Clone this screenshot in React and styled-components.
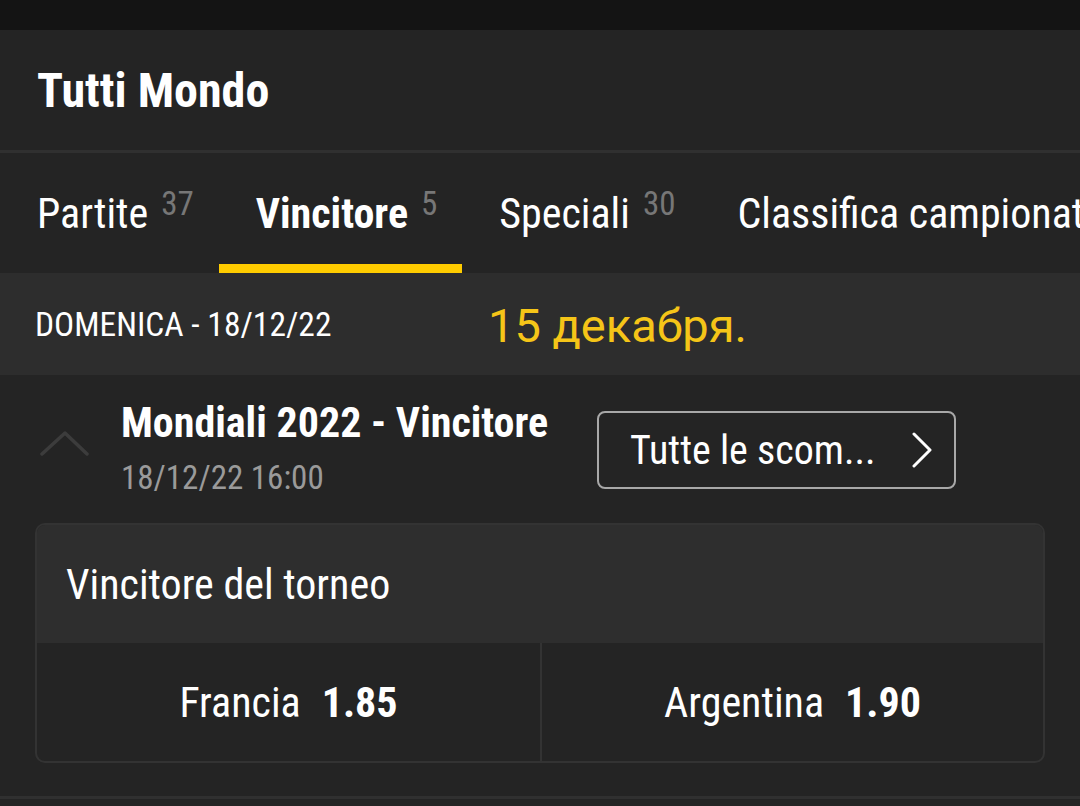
import React from 'react';
import styled, { createGlobalStyle } from 'styled-components';

const GlobalStyle = createGlobalStyle`
    html, body {
        margin: 0;
        padding: 0;
        background: #242424;
    }
    body {
        font-family: "Roboto Condensed", "Liberation Sans Narrow", "DejaVu Sans Condensed", sans-serif;
        color: #ffffff;
        overflow: hidden;
    }
`;

const Page = styled.div`
    width: 1080px;
    height: 806px;
    display: flex;
    flex-direction: column;
    background: #242424;
    overflow: hidden;
`;

const StatusBar = styled.div`
    height: 30px;
    background: #141414;
    flex-shrink: 0;
`;

const Header = styled.header`
    height: 120px;
    display: flex;
    align-items: center;
    padding: 0 37px;
    border-bottom: 3px solid #303030;
    flex-shrink: 0;
`;

const Title = styled.h1`
    margin: 0;
    font-size: 48px;
    font-weight: 700;
`;

const Tabs = styled.nav`
    height: 120px;
    display: flex;
    overflow: hidden;
    white-space: nowrap;
    flex-shrink: 0;
`;

const Tab = styled.div`
    position: relative;
    display: flex;
    align-items: center;
    padding: 0 25px 0 37px;
    font-size: 42px;
    font-weight: ${p => (p.active ? 700 : 400)};
    flex-shrink: 0;

    &::after {
        content: '';
        position: absolute;
        left: 0;
        right: 0;
        bottom: 0;
        height: 9px;
        background: ${p => (p.active ? '#ffcc00' : 'transparent')};
    }
`;

const Count = styled.sup`
    font-size: 33px;
    font-weight: 400;
    color: #777777;
    margin-left: 13px;
    position: relative;
    top: -10px;
`;

const DateBand = styled.div`
    height: 102px;
    display: flex;
    align-items: center;
    padding: 0 35px;
    background: #2d2d2d;
    flex-shrink: 0;
`;

const DayLabel = styled.span`
    font-size: 33.5px;
    width: 453px;
    flex-shrink: 0;
`;

const Note = styled.span`
    font-family: Roboto, "Noto Sans", sans-serif;
    font-size: 47px;
    color: #f5c518;
    position: relative;
    top: 1px;
`;

const EventRow = styled.div`
    display: flex;
    align-items: flex-start;
    padding: 26px 0 0 40px;
    height: 122px;
    flex-shrink: 0;
`;

const Collapse = styled.div`
    width: 81px;
    padding-top: 30px;
    flex-shrink: 0;
`;

const EventInfo = styled.div`
    display: flex;
    flex-direction: column;
    width: 476px;
    flex-shrink: 0;
`;

const EventTitle = styled.div`
    font-size: 42px;
    font-weight: 700;
    line-height: 44px;
`;

const EventTime = styled.div`
    font-size: 33px;
    color: #9a9a9a;
    margin-top: 13px;
`;

const MoreButton = styled.button`
    margin-top: 10px;
    width: 359px;
    height: 78px;
    border: 2px solid #a8a8a8;
    border-radius: 8px;
    background: transparent;
    color: #ffffff;
    font-family: inherit;
    font-size: 40px;
    display: flex;
    align-items: center;
    justify-content: space-between;
    padding: 0 21px 0 31px;
    box-sizing: border-box;
`;

const Card = styled.section`
    margin: 0 35px;
    border: 2px solid #333333;
    border-radius: 10px;
    overflow: hidden;
    flex-shrink: 0;
`;

const CardHeader = styled.div`
    height: 118px;
    background: #2e2e2e;
    display: flex;
    align-items: center;
    padding: 0 29px;
    font-size: 42px;
`;

const Odds = styled.div`
    display: grid;
    grid-template-columns: 1fr 1fr;
    height: 118px;
`;

const OddCell = styled.div`
    display: flex;
    align-items: center;
    justify-content: center;
    gap: 21px;
    font-size: 42px;
    & + & {
        border-left: 2px solid #333333;
    }
`;

const Price = styled.span`
    font-weight: 700;
`;

const Footer = styled.div`
    margin-top: 33px;
    border-top: 3px solid #303030;
`;

const tabs = [
    { name: 'Partite', count: 37 },
    { name: 'Vincitore', count: 5, active: true },
    { name: 'Speciali', count: 30 },
    { name: 'Classifica campionato' },
];

export default function App() {
    return (
        <Page>
            <GlobalStyle />
            <StatusBar />
            <Header>
                <Title>Tutti Mondo</Title>
            </Header>
            <Tabs>
                {tabs.map(t => (
                    <Tab key={t.name} active={t.active}>
                        {t.name}
                        {t.count && <Count>{t.count}</Count>}
                    </Tab>
                ))}
            </Tabs>
            <DateBand>
                <DayLabel>DOMENICA - 18/12/22</DayLabel>
                <Note>15 декабря.</Note>
            </DateBand>
            <EventRow>
                <Collapse>
                    <svg width="50" height="26" viewBox="0 0 50 26">
                        <polyline points="2,23 25,2 47,23" fill="none" stroke="#3c3c3c" strokeWidth="3.5" strokeLinecap="round" strokeLinejoin="round" />
                    </svg>
                </Collapse>
                <EventInfo>
                    <EventTitle>Mondiali 2022 - Vincitore</EventTitle>
                    <EventTime>18/12/22 16:00</EventTime>
                </EventInfo>
                <MoreButton>
                    <span>Tutte le scom...</span>
                    <svg width="22" height="36" viewBox="0 0 22 36">
                        <polyline points="3,2 19,18 3,34" fill="none" stroke="#ffffff" strokeWidth="3" strokeLinecap="round" strokeLinejoin="round" />
                    </svg>
                </MoreButton>
            </EventRow>
            <Card>
                <CardHeader>Vincitore del torneo</CardHeader>
                <Odds>
                    <OddCell>Francia <Price>1.85</Price></OddCell>
                    <OddCell>Argentina <Price>1.90</Price></OddCell>
                </Odds>
            </Card>
            <Footer />
        </Page>
    );
}
